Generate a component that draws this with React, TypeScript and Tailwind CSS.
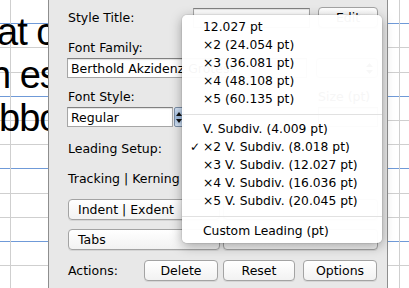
import React from 'react';

const ROWS = Array.from({ length: 12 }, (_, i) => i);

const Ruled: React.FC<{ children?: React.ReactNode; lineLeft: string; className?: string }> = ({ children, lineLeft, className }) => (
  <div className={`relative h-full overflow-hidden bg-white ${className ?? ''}`}>
    {/* ruled page background */}
    <div className="absolute inset-0 flex flex-col pointer-events-none">
      {ROWS.map((i) => (
        <div
          key={i}
          className={`h-[24.2px] shrink-0 border-b ${i % 3 === 0 ? 'border-[#6f9ad8]' : 'border-[#cfcfcf]'}`}
        />
      ))}
    </div>
    <div className={`absolute top-0 bottom-0 w-px bg-[#cfcfcf] ${lineLeft}`} />
    <div className="relative">{children}</div>
  </div>
);

const Button: React.FC<{ children?: React.ReactNode; className?: string }> = ({ children, className }) => (
  <div
    className={`h-[21px] flex items-center justify-center rounded-[4px] border border-[#a3a3a3] bg-gradient-to-b from-white to-[#f2f2f2] shadow-[0_1px_0_rgba(0,0,0,0.08)] ${className ?? ''}`}
  >
    {children}
  </div>
);

const Field: React.FC<{ children?: React.ReactNode; className?: string }> = ({ children, className }) => (
  <div
    className={`h-[20px] flex items-center px-[3px] bg-white border border-[#a6a6a6] border-t-[#808080] shadow-[inset_0_1px_1px_rgba(0,0,0,0.12)] whitespace-nowrap overflow-hidden ${className ?? ''}`}
  >
    {children}
  </div>
);

const Stepper = () => (
  <div className="w-[10px] h-[20px] flex flex-col items-center justify-center gap-[3px] rounded-[2px] border border-[#7b8ea6] bg-gradient-to-b from-[#d6e4f5] via-[#9fbce0] to-[#d6e4f5]">
    <svg width="6" height="4" viewBox="0 0 6 4"><path d="M3 0L6 4H0z" fill="#111" /></svg>
    <svg width="6" height="4" viewBox="0 0 6 4"><path d="M0 0H6L3 4z" fill="#111" /></svg>
  </div>
);

const MENU_TOP = ['12.027 pt', '×2 (24.054 pt)', '×3 (36.081 pt)', '×4 (48.108 pt)', '×5 (60.135 pt)'];
const MENU_SUB = [
  'V. Subdiv. (4.009 pt)',
  '×2 V. Subdiv. (8.018 pt)',
  '×3 V. Subdiv. (12.027 pt)',
  '×4 V. Subdiv. (16.036 pt)',
  '×5 V. Subdiv. (20.045 pt)',
];

const MenuItem: React.FC<{ label: string; checked?: boolean }> = ({ label, checked }) => (
  <div className="h-[18px] flex items-center pl-[21px] relative whitespace-nowrap">
    {checked && <span className="absolute left-[8px] text-[12px]">✓</span>}
    {label}
  </div>
);

const Separator = () => (
  <div className="h-[12px] pt-[6px]">
    <div className="h-px bg-[#e1e1e1]" />
  </div>
);

export default function App() {
  return (
    <div className="relative w-[409px] h-[288px] overflow-hidden flex bg-white font-['DejaVu_Sans',sans-serif] text-[12.5px] text-black">
      {/* left page */}
      <Ruled lineLeft="left-[10px]" className="w-[48px] shrink-0">
        <div className="pt-[11px] font-['Liberation_Sans',Arial,sans-serif] text-[38px] leading-[43px] tracking-[-1px] whitespace-nowrap">
          <div className="ml-[-3px]">at c</div>
          <div className="ml-[-10px]">n es</div>
          <div className="ml-[-1px]">bbo</div>
        </div>
      </Ruled>

      {/* inspector panel */}
      <div className="w-[340px] shrink-0 h-full bg-[#e8e8e8] border-x border-[#8e8e8e] flex flex-col pl-[19px] pr-[9px] leading-[15px]">
        <div className="mt-[7px] h-[21px] flex items-center">
          <span className="flex-1">Style Title:</span>
          <Field className="w-[117px]" />
          <Button className="w-[60px] ml-[8px]">Edit</Button>
        </div>

        <div className="mt-[12px]">Font Family:</div>
        <div className="mt-[3px] flex items-center">
          <Field className="w-[240px] -ml-px">Berthold Akzidenz Grotesk</Field>
          <div className="ml-auto w-[62px] h-[20px] rounded-[4px] border border-[#a3a3a3] bg-white flex items-center justify-end pr-[4px]">
            <svg width="7" height="11" viewBox="0 0 7 11"><path d="M3.5 0L7 4H0zM0 7h7l-3.5 4z" fill="#333" /></svg>
          </div>
        </div>

        <div className="mt-[11px] flex">
          <span className="flex-1">Font Style:</span>
          <span className="w-[60px]">Size (pt)</span>
        </div>
        <div className="mt-[3px] flex items-center">
          <Field className="w-[106px] -ml-px">Regular</Field>
          <div className="ml-px"><Stepper /></div>
          <Field className="ml-auto w-[60px]" />
        </div>

        <div className="mt-[14px]">Leading Setup:</div>
        <div className="mt-[15px]">Tracking | Kerning</div>

        <div className="mt-[13px] flex gap-[3px]">
          <Button className="w-[152px] justify-start pl-[9px]">Indent | Exdent</Button>
          <Button className="flex-1" />
        </div>
        <div className="mt-[9px] flex gap-[3px]">
          <Button className="w-[152px] justify-start pl-[9px]">Tabs</Button>
          <Button className="flex-1" />
        </div>

        <div className="mt-[10px] flex items-center">
          <span className="w-[76px]">Actions:</span>
          <Button className="w-[74px]">Delete</Button>
          <Button className="w-[72px] ml-[5px]">Reset</Button>
          <Button className="w-[74px] ml-[8px]">Options</Button>
        </div>
      </div>

      {/* right page edge */}
      <Ruled lineLeft="left-[11px]" className="flex-1" />

      {/* leading popup menu */}
      <div className="absolute left-[182px] top-[15px] w-[200px] pt-[3px] pb-[3px] rounded-[5px] bg-white/[0.965] shadow-[0_3px_12px_rgba(0,0,0,0.35),0_0_0_1px_rgba(0,0,0,0.06)] text-[12.3px]">
        {MENU_TOP.map((m) => (
          <MenuItem key={m} label={m} />
        ))}
        <Separator />
        {MENU_SUB.map((m, i) => (
          <MenuItem key={m} label={m} checked={i === 1} />
        ))}
        <Separator />
        <MenuItem label="Custom Leading (pt)" />
      </div>
    </div>
  );
}
